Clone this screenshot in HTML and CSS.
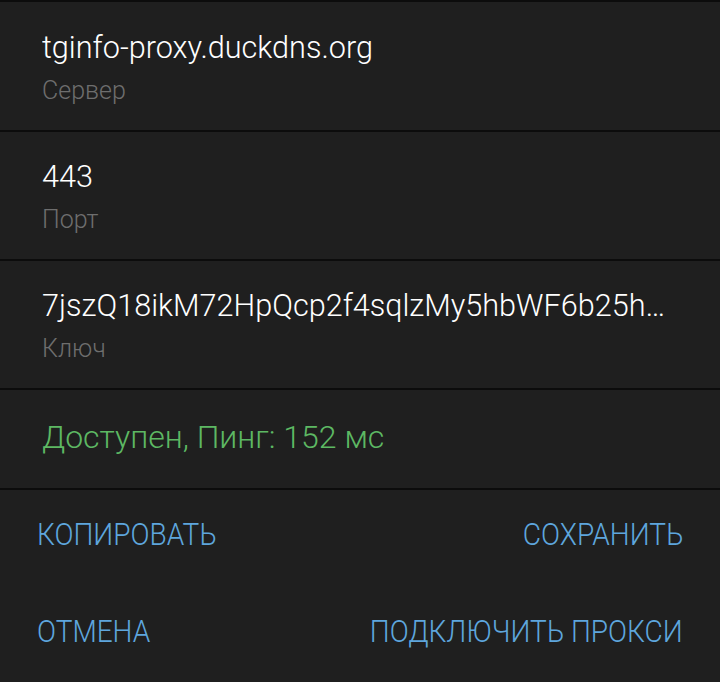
FILE: index.html
```html
<!DOCTYPE html>
<html lang="ru">
<head>
<meta charset="utf-8">
<link rel="stylesheet" href="styles.css">
</head>
<body>
<div class="dialog">
  <div class="row">
    <div class="value">tginfo-proxy.duckdns.org</div>
    <div class="label">Сервер</div>
  </div>
  <div class="row">
    <div class="value">443</div>
    <div class="label">Порт</div>
  </div>
  <div class="row">
    <div class="value">7jszQ18ikM72HpQcp2f4sqlzMy5hbWF6b25h…</div>
    <div class="label">Ключ</div>
  </div>
  <div class="status"><div class="status-text">Доступен, Пинг: 152 мс</div></div>
  <div class="actions">
    <div class="btn-row">
      <span class="btn btn-left">КОПИРОВАТЬ</span>
      <span class="btn btn-right">СОХРАНИТЬ</span>
    </div>
    <div class="btn-row">
      <span class="btn btn-left">ОТМЕНА</span>
      <span class="btn btn-right">ПОДКЛЮЧИТЬ ПРОКСИ</span>
    </div>
  </div>
</div>
</body>
</html>
```
FILE: styles.css
```css
html, body {
  margin: 0;
  padding: 0;
  background: #1f1f1f;
}
.dialog {
  width: 720px;
  height: 682px;
  overflow: hidden;
  background: #1f1f1f;
  font-family: Roboto, "Noto Sans", sans-serif;
  font-weight: 300;
  border-top: 2px solid #0c0c0c;
  padding-top: 1px;
  box-sizing: border-box;
}
.row {
  height: 129px;
  box-sizing: border-box;
  border-bottom: 2px solid #0c0c0c;
  padding: 25px 42px 0 42px;
}
.value {
  color: #ffffff;
  font-size: 32px;
  line-height: 38px;
  white-space: nowrap;
  transform: scaleX(0.957);
  transform-origin: left center;
}
.label {
  color: #6e6e6e;
  font-size: 25px;
  line-height: 30px;
  margin-top: 10px;
}
.status {
  height: 100px;
  box-sizing: border-box;
  border-bottom: 2px solid #0c0c0c;
  padding: 29px 42px 0 42px;
}
.status-text {
  color: #5db863;
  font-size: 32px;
  line-height: 36px;
  white-space: nowrap;
}
.btn-row {
  display: flex;
  justify-content: space-between;
  align-items: flex-start;
  height: 97px;
  box-sizing: border-box;
  padding: 27px 37px 0 37px;
}
.btn {
  color: #5ea6dd;
  font-size: 31px;
  line-height: 36px;
  white-space: nowrap;
  display: inline-block;
  transform: scaleX(0.905);
}
.btn-left {
  transform-origin: left center;
}
.btn-right {
  transform-origin: right center;
}
```
